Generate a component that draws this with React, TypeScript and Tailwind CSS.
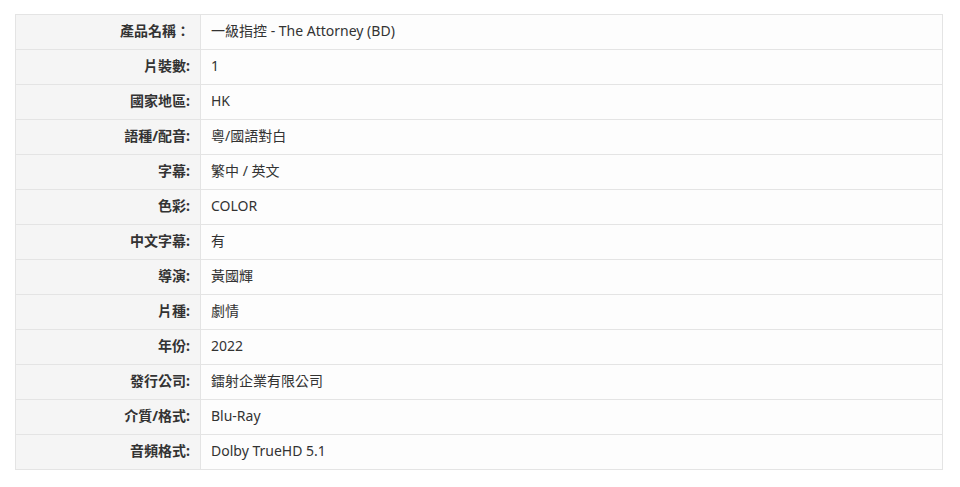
const rows: [string, string][] = [
  ["產品名稱：", "一級指控 - The Attorney (BD)"],
  ["片裝數:", "1"],
  ["國家地區:", "HK"],
  ["語種/配音:", "粵/國語對白"],
  ["字幕:", "繁中 / 英文"],
  ["色彩:", "COLOR"],
  ["中文字幕:", "有"],
  ["導演:", "黃國輝"],
  ["片種:", "劇情"],
  ["年份:", "2022"],
  ["發行公司:", "鐳射企業有限公司"],
  ["介質/格式:", "Blu-Ray"],
  ["音頻格式:", "Dolby TrueHD 5.1"],
];

export default function App() {
  return (
    <div
      className="min-h-[487px] bg-white px-[15px] pt-[14px] text-[14px] text-[#333]"
      style={{ fontFamily: '"Noto Sans", "Noto Sans CJK TC", sans-serif' }}
    >
      <table className="w-[928px] border-collapse border border-[#e4e4e4]">
        <tbody>
          {rows.map(([label, value]) => (
            <tr key={label} className="h-[35px]">
              <th className="w-[185px] border border-[#e4e4e4] bg-[#f5f5f5] pr-[10px] pb-[3px] text-right font-bold">
                {label}
              </th>
              <td className="border border-[#e4e4e4] bg-[#fdfdfd] pl-[10px] pb-[3px] font-normal">
                {value}
              </td>
            </tr>
          ))}
        </tbody>
      </table>
    </div>
  );
}
